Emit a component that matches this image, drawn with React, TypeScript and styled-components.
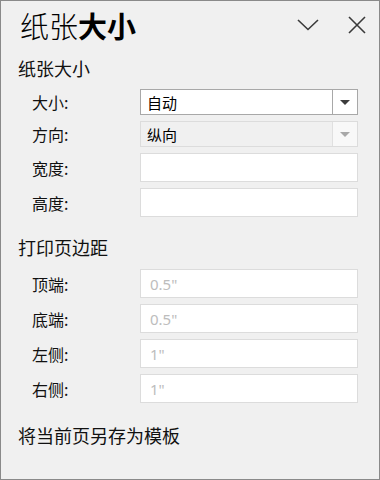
import React from "react";
import styled, { createGlobalStyle } from "styled-components";

const GlobalStyle = createGlobalStyle`
  html, body {
    margin: 0;
    padding: 0;
    background: #f0f0f0;
  }
  * {
    box-sizing: border-box;
  }
`;

const Pane = styled.div`
  width: 380px;
  height: 480px;
  border: 1px solid #8a8a8a;
  background: #f0f0f0;
  font-family: "Noto Sans CJK SC", "Noto Sans", sans-serif;
  color: #1a1a1a;
  display: flex;
  flex-direction: column;
  overflow: hidden;
`;

const Header = styled.div`
  height: 47px;
  display: flex;
  align-items: center;
  padding: 0 7px 0 19px;
`;

const Title = styled.div`
  flex: 1;
  font-size: 29px;
  line-height: 36px;
  font-weight: 300;
  color: #000;
`;

const Strong = styled.span`
  font-weight: 700;
`;

const IconButton = styled.button`
  width: 30px;
  height: 30px;
  border: none;
  background: transparent;
  padding: 0;
  display: flex;
  align-items: center;
  justify-content: center;
  margin-left: 19px;
`;

const Heading = styled.div<{ $top: number }>`
  margin-top: ${(p) => p.$top}px;
  padding-left: 17px;
  font-size: 18px;
  line-height: 24px;
  color: #111;
`;

const Rows = styled.div<{ $top: number }>`
  margin-top: ${(p) => p.$top}px;
  display: flex;
  flex-direction: column;
  gap: 6px;
`;

const Row = styled.div<{ $h: number }>`
  height: ${(p) => p.$h}px;
  display: flex;
  align-items: center;
  padding-left: 31px;
`;

const Label = styled.div`
  width: 108px;
  font-size: 16px;
  color: #111;
`;

const Select = styled.div<{ $disabled?: boolean }>`
  width: 218px;
  height: 100%;
  display: flex;
  border: 1px solid ${(p) => (p.$disabled ? "#dcdcdc" : "#a8a8a8")};
  background: ${(p) => (p.$disabled ? "#f0f0f0" : "#fff")};
`;

const SelectValue = styled.div`
  flex: 1;
  display: flex;
  align-items: center;
  padding-left: 6px;
  font-size: 15px;
  color: #000;
`;

const SelectArrow = styled.div<{ $disabled?: boolean }>`
  width: 25px;
  border-left: 1px solid ${(p) => (p.$disabled ? "#e0e0e0" : "#a8a8a8")};
  background: ${(p) => (p.$disabled ? "#f8f8f8" : "#fff")};
  display: flex;
  align-items: center;
  justify-content: center;
  &::after {
    content: "";
    border-left: 5px solid transparent;
    border-right: 5px solid transparent;
    border-top: 5px solid ${(p) => (p.$disabled ? "#a8a8a8" : "#3c3c3c")};
  }
`;

const TextBox = styled.input`
  width: 218px;
  height: 100%;
  border: 1px solid #dcdcdc;
  background: #fff;
  padding: 0 9px;
  font-family: "Noto Sans", "Noto Sans CJK SC", sans-serif;
  font-size: 15px;
  outline: none;
  &::placeholder {
    color: #bdbdbd;
  }
`;

const Footer = styled.div`
  margin-top: 20px;
  padding-left: 17px;
  font-size: 18px;
  line-height: 24px;
  color: #111;
`;

const sizeRows = [
  { label: "大小:", value: "自动", disabled: false },
  { label: "方向:", value: "纵向", disabled: true },
];

const margins = [
  { label: "顶端:", placeholder: "0.5\"" },
  { label: "底端:", placeholder: "0.5\"" },
  { label: "左侧:", placeholder: "1\"" },
  { label: "右侧:", placeholder: "1\"" },
];

export default function App() {
  return (
    <>
      <GlobalStyle />
      <Pane>
        <Header>
          <Title>
            纸张<Strong>大小</Strong>
          </Title>
          <IconButton aria-label="折叠">
            <svg width="22" height="12" viewBox="0 0 22 12">
              <polyline
                points="1,1 11,10.5 21,1"
                fill="none"
                stroke="#3a3a3a"
                strokeWidth="1.6"
              />
            </svg>
          </IconButton>
          <IconButton aria-label="关闭">
            <svg width="18" height="18" viewBox="0 0 18 18">
              <path d="M1 1 L17 17 M17 1 L1 17" stroke="#3a3a3a" strokeWidth="1.6" />
            </svg>
          </IconButton>
        </Header>

        <Heading $top={8}>纸张大小</Heading>
        <Rows $top={9}>
          {sizeRows.map((r) => (
            <Row key={r.label} $h={26}>
              <Label>{r.label}</Label>
              <Select $disabled={r.disabled}>
                <SelectValue>{r.value}</SelectValue>
                <SelectArrow $disabled={r.disabled} />
              </Select>
            </Row>
          ))}
          <Row $h={29}>
            <Label>宽度:</Label>
            <TextBox />
          </Row>
          <Row $h={29}>
            <Label>高度:</Label>
            <TextBox />
          </Row>
        </Rows>

        <Heading $top={18}>打印页边距</Heading>
        <Rows $top={10}>
          {margins.map((m) => (
            <Row key={m.label} $h={29}>
              <Label>{m.label}</Label>
              <TextBox placeholder={m.placeholder} />
            </Row>
          ))}
        </Rows>

        <Footer>将当前页另存为模板</Footer>
      </Pane>
    </>
  );
}
